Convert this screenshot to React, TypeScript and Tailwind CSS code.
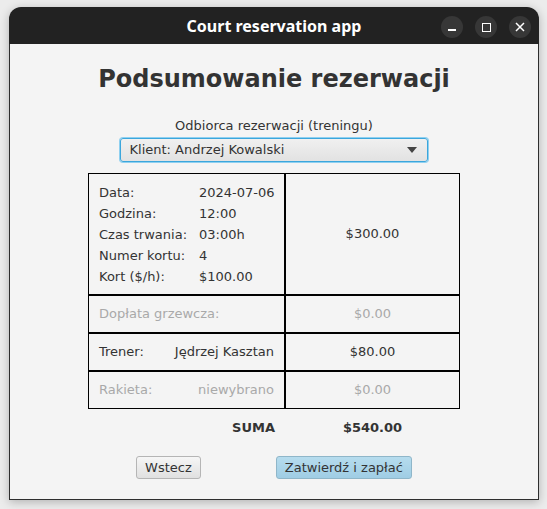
import React, { useState } from 'react';

const rows1 = [
  { label: 'Data:', value: '2024-07-06' },
  { label: 'Godzina:', value: '12:00' },
  { label: 'Czas trwania:', value: '03:00h' },
  { label: 'Numer kortu:', value: '4' },
  { label: 'Kort ($/h):', value: '$100.00' },
];

const font = { fontFamily: '"DejaVu Sans", "Noto Sans", sans-serif' };

const App: React.FC = () => {
  const [client] = useState('Klient: Andrzej Kowalski');

  return (
    <div className="w-[547px] h-[509px] bg-[#ececec] pt-[7px] pl-[9px] overflow-hidden">
      <div className="w-[530px] h-[493px] rounded-t-[12px] flex flex-col shadow-[0_2px_10px_rgba(0,0,0,0.25)] overflow-hidden">
        {/* Title bar */}
        <div className="h-[37px] bg-[#222222] flex items-center relative shrink-0">
          <div
            className="flex-1 text-center text-white text-[16px] font-bold"
            style={{ fontFamily: '"Noto Sans", "Open Sans", sans-serif' }}
          >
            Court reservation app
          </div>
          <div className="absolute right-[8px] top-[9px] flex gap-[12px]">
            <div className="w-[22px] h-[22px] rounded-full bg-[#373737] flex items-center justify-center">
              <div className="w-[8px] h-[2px] bg-white mt-[6px]" />
            </div>
            <div className="w-[22px] h-[22px] rounded-full bg-[#373737] flex items-center justify-center">
              <div className="w-[9px] h-[9px] border-[1.5px] border-white" />
            </div>
            <div className="w-[22px] h-[22px] rounded-full bg-[#373737] flex items-center justify-center">
              <svg width="10" height="10" viewBox="0 0 10 10">
                <path d="M1 1 L9 9 M9 1 L1 9" stroke="white" strokeWidth="1.5" />
              </svg>
            </div>
          </div>
        </div>

        {/* Content */}
        <div
          className="flex-1 bg-[#f4f4f4] border-x border-b border-[#2e2e2e] flex flex-col items-center text-[#333333] text-[13px]"
          style={font}
        >
          <h1 className="mt-[21px] text-[24px] leading-[28px] font-bold">Podsumowanie rezerwacji</h1>

          <div className="mt-[25px] leading-[16px]">Odbiorca rezerwacji (treningu)</div>
          <div className="mt-[4px] w-[308px] h-[24px] -ml-[1px] rounded-[3px] border border-[#3ba6dc] shadow-[0_0_0_1px_#8fd0f0] bg-gradient-to-b from-[#f0f0f0] to-[#e2e2e2] flex items-center px-[9px]">
            <span className="flex-1">{client}</span>
            <svg width="10" height="6" viewBox="0 0 10 6" className="mr-[1px]">
              <path d="M0 0 L10 0 L5 6 Z" fill="#444" />
            </svg>
          </div>

          {/* Table */}
          <div className="mt-[11px] grid grid-cols-[197px_175px]">
            <div className="h-[122px] border border-black pl-[10px] pt-[2px] flex flex-col justify-center">
              {rows1.map((r) => (
                <div key={r.label} className="flex h-[21px] items-center">
                  <span className="w-[100px]">{r.label}</span>
                  <span>{r.value}</span>
                </div>
              ))}
            </div>
            <div className="h-[122px] border border-black flex items-center justify-center">$300.00</div>

            <div className="h-[38px] border border-black pl-[10px] flex items-center text-[#a9a9a9]">
              Dopłata grzewcza:
            </div>
            <div className="h-[38px] border border-black flex items-center justify-center text-[#a9a9a9]">$0.00</div>

            <div className="h-[38px] border border-black px-[10px] flex items-center justify-between">
              <span>Trener:</span>
              <span>Jędrzej Kasztan</span>
            </div>
            <div className="h-[38px] border border-black flex items-center justify-center">$80.00</div>

            <div className="h-[38px] border border-black px-[10px] flex items-center justify-between text-[#a9a9a9]">
              <span>Rakieta:</span>
              <span>niewybrano</span>
            </div>
            <div className="h-[38px] border border-black flex items-center justify-center text-[#a9a9a9]">$0.00</div>
          </div>

          <div className="mt-[11px] grid grid-cols-[197px_175px] font-bold leading-[16px]">
            <div className="text-right pr-[10px]">SUMA</div>
            <div className="text-center">$540.00</div>
          </div>

          <div className="mt-[20px] flex gap-[75px]">
            <button className="h-[23px] px-[8px] rounded-[3px] border border-[#b5b5b5] bg-gradient-to-b from-[#f6f6f6] to-[#e0e0e0] text-[#333333] text-[13px]">
              Wstecz
            </button>
            <button className="h-[23px] px-[8px] rounded-[3px] border border-[#8fb6c9] bg-gradient-to-b from-[#b6dcee] to-[#9fcde4] text-[#333333] text-[13px]">
              Zatwierdź i zapłać
            </button>
          </div>
        </div>
      </div>
    </div>
  );
};

export default App;
